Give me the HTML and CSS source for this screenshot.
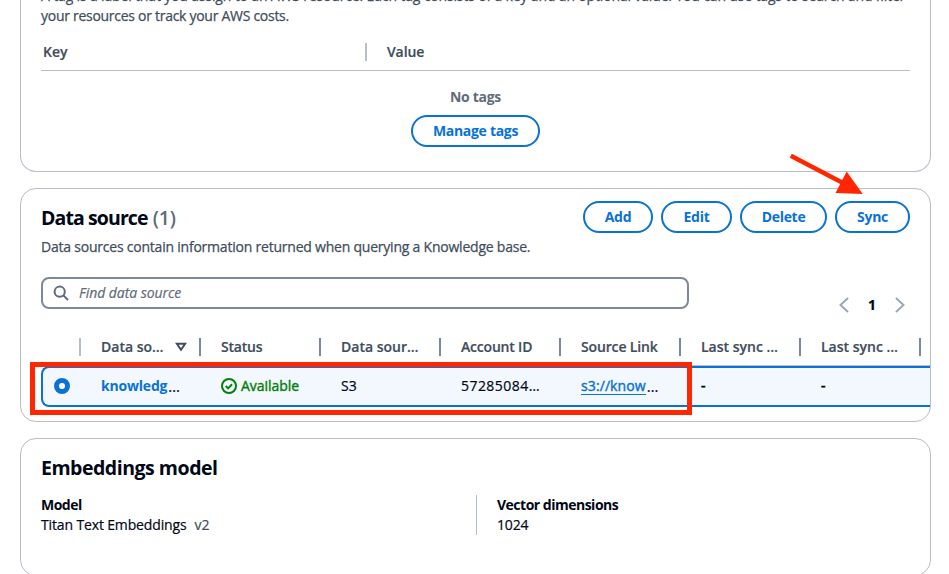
FILE: index.html
```html
<!DOCTYPE html>
<html lang="en">
<head>
<meta charset="utf-8">
<title>Knowledge base</title>
<link rel="stylesheet" href="styles.css">
</head>
<body>
<main class="page">
  <section class="panel panel-tags">
    <p class="description tags-description"><span class="tags-line">A tag is a label that you assign to an AWS resource. Each tag consists of a key and an optional value. You can use tags to search and filter</span><br><span class="tags-tail">your resources or track your AWS costs.</span></p>
    <div class="tags-head"><div class="th-key">Key</div><div class="th-value">Value</div></div>
    <div class="empty"><span class="empty-text">No tags</span><button class="btn btn-manage">Manage tags</button></div>
  </section>

  <section class="panel panel-source">
    <header class="source-header">
      <div>
        <h2 class="title title-source">Data source <span class="count">(1)</span></h2>
        <p class="description source-description">Data sources contain information returned when querying a Knowledge base.</p>
      </div>
      <div class="actions">
        <button class="btn btn-add">Add</button><button class="btn btn-edit">Edit</button><button class="btn btn-delete">Delete</button><button class="btn btn-sync">Sync</button>
      </div>
    </header>
    <div class="tools">
      <div class="search">
        <svg class="icon" viewBox="0 0 16 16"><circle cx="6.700" cy="6.700" r="5.100"/><path d="M10.400 10.400 15 15"/></svg>
        <span class="placeholder">Find data source</span>
      </div>
      <div class="pager">
        <svg class="icon" viewBox="0 0 16 16"><path d="M12 1 4.500 8 12 15"/></svg>
        <span>1</span>
        <svg class="icon" viewBox="0 0 16 16"><path d="M4 1 11.500 8 4 15"/></svg>
      </div>
    </div>
    <div class="table">
      <div class="row head">
        <div class="cell light"></div>
        <div class="cell sorted"><span class="h-name">Data so…</span><svg class="sort" viewBox="0 0 12 10"><path d="M1.800 1.700h8.400L6 7.700z"/></svg></div>
        <div class="cell"><span class="h-status">Status</span></div>
        <div class="cell"><span class="h-type">Data sour…</span></div>
        <div class="cell"><span class="h-account">Account ID</span></div>
        <div class="cell"><span class="h-link">Source Link</span></div>
        <div class="cell"><span class="h-sync">Last sync …</span></div>
        <div class="cell"><span class="h-sync">Last sync …</span></div>
      </div>
      <div class="row body">
        <div class="cell radio-cell"><span class="radio"></span></div>
        <div class="cell"><a class="name">knowledg</a><span class="dots">…</span></div>
        <div class="cell status"><svg class="icon" viewBox="0 0 16 16"><circle cx="8" cy="8" r="7"/><path d="m4.800 8 2.300 2.400 4-4.200"/></svg><span class="available">Available</span></div>
        <div class="cell">S3</div>
        <div class="cell"><span class="account">57285084…</span></div>
        <div class="cell"><a class="link">s3://know</a><span class="dots">…</span></div>
        <div class="cell dash">-</div>
        <div class="cell dash">-</div>
      </div>
    </div>
    <div class="highlight"></div>
  </section>

  <section class="panel panel-model">
    <h2 class="title title-model">Embeddings model</h2>
    <div class="facts">
      <div class="fact"><strong class="f-model">Model</strong><div class="fact-value"><span class="f-titan">Titan Text Embeddings</span><span class="version">v2</span></div></div>
      <div class="fact divided"><strong class="f-vector">Vector dimensions</strong><div class="fact-value f-number">1024</div></div>
    </div>
  </section>
  <svg class="arrow" viewBox="0 0 80 50"><path class="shaft" d="M5.800 5.700 58 33"/><path class="tip" d="M61.700 21.500 77.700 44 50.500 43z"/></svg>
</main>
</body>
</html>
```

FILE: styles.css
```css
* { box-sizing: border-box; }
html, body { height: 100%; }
body { margin: 0; overflow: hidden; background: #fff; color: #000716; font: 14px/20px "Open Sans", "Noto Sans", sans-serif; -webkit-text-stroke: .2px currentColor; }
h2, p { margin: 0; }
.page { position: relative; height: 574px; padding: 0 18px 0 20px; overflow: hidden; }
.panel { position: relative; border: 1px solid #b6bec9; border-radius: 16px; padding: 0 20px; white-space: nowrap; }
.panel-tags { display: flow-root; height: 172px; border-top: 0; border-radius: 0 0 16px 16px; }
.description { color: #414d5c; -webkit-text-stroke-width: .25px; }
.tags-description { margin-top: -14px; }
.tags-line { letter-spacing: -.155px; }
.tags-tail { letter-spacing: -.28px; }
.tags-head { display: grid; grid-template-columns: 326px 1fr; padding-top: 8px; height: 36px; margin-top: 9px; border-bottom: 1px solid #b6bec9; color: #414d5c; font-weight: 600; }
.th-key { padding-left: 2px; height: 18px; line-height: 18px; border-right: 2px solid #b6bec9; }
.th-value { padding-left: 20px; height: 18px; line-height: 18px; letter-spacing: -.1px; }
.empty { display: flex; flex-direction: column; align-items: center; padding-top: 16px; gap: 8px; color: #5f6b7a; font-weight: 700; }
.empty-text { letter-spacing: -.3px; -webkit-text-stroke-width: 0; }
.btn { height: 32px; padding: 0; border: 2px solid #0972d3; border-radius: 16px; background: #fff; color: #0972d3; font: 700 14px/20px "Open Sans", "Noto Sans", sans-serif; letter-spacing: -.3px; -webkit-text-stroke-width: 0; }
.btn-manage { width: 129px; }
.btn-add { width: 70px; }
.btn-edit { width: 71px; }
.btn-delete { width: 87px; }
.btn-sync { width: 75px; }
.panel-source { height: 234px; margin-top: 16px; }
.source-header { display: flex; justify-content: space-between; padding-top: 12px; }
.title { font-size: 19.5px; line-height: 24px; font-weight: 700; -webkit-text-stroke-width: 0; }
.title-source { margin-top: 5px; letter-spacing: -.9px; }
.count { margin-left: 1px; color: #5f6b7a; font-weight: 600; letter-spacing: -.2px; }
.source-description { margin-top: 7px; letter-spacing: -.22px; }
.actions { display: flex; gap: 8px; }
.tools { display: flex; justify-content: space-between; margin-top: 20px; }
.search { display: flex; align-items: center; width: 648px; height: 32px; padding-left: 10px; gap: 10px; border: 2px solid #7d8998; border-radius: 8px; color: #5f6b7a; }
.placeholder { font-style: italic; letter-spacing: -.05px; }
.icon { display: block; width: 16px; height: 16px; fill: none; stroke: currentColor; stroke-width: 2; flex: none; }
.pager { display: flex; align-items: center; gap: 16px; height: 20px; margin: 18px 2px 0 0; font-weight: 700; }
.pager .icon { stroke: #9ba7b6; }
.table { width: 889px; overflow: hidden; margin-top: 13px; }
.row { display: grid; grid-template-columns: 40px repeat(7, 120px); width: 889px; }
.head { height: 38px; color: #414d5c; font-weight: 600; border-bottom: 1px solid #b6bec9; }
.head .cell { height: 18px; margin-top: 10px; line-height: 18px; border-right: 2px solid #7d8998; }
.head .light { border-color: #b6bec9; }
.h-status { letter-spacing: -.2px; }
.h-account { letter-spacing: -.2px; }
.h-link { letter-spacing: -.15px; }
.cell { padding-left: 20px; display: flex; align-items: center; }
.sorted { justify-content: space-between; padding-right: 12px; }
.sort { width: 12px; height: 10px; fill: none; stroke: currentColor; stroke-width: 2; }
.body { height: 41px; grid-template-columns: 38px repeat(7, 120px); border: 2px solid #0972d3; border-right: 0; border-radius: 8px 0 0 8px; background: #f2f8fd; }
.body .cell { padding-bottom: 1px; }
.body .radio-cell { padding-left: 11px; }
.radio { width: 16px; height: 16px; border: 5px solid #0972d3; border-radius: 50%; background: #fff; }
.name { color: #0972d3; font-weight: 700; letter-spacing: -.2px; -webkit-text-stroke-width: 0; }
.dots { margin-left: 1px; font-size: 15px; line-height: 20px; letter-spacing: 0; }
.status { gap: 4px; color: #037f0c; }
.available { -webkit-text-stroke-width: .4px; letter-spacing: -.05px; }
.account { letter-spacing: .45px; }
.link { color: #0972d3; line-height: 17px; border-bottom: 1px solid #0972d3; letter-spacing: .1px; -webkit-text-stroke-width: .4px; }
.dash { -webkit-text-stroke-width: .6px; }
.highlight { position: absolute; left: 9px; top: 173px; width: 662px; height: 53px; border: 5px solid #ff2600; }
.panel-model { height: 138px; margin-top: 16px; }
.title-model { padding-top: 17px; letter-spacing: -.48px; }
.facts { display: grid; grid-template-columns: 435px 1fr; margin-top: 15px; }
.divided { border-left: 1px solid #b6bec9; padding-left: 20px; }
.fact strong { display: block; letter-spacing: -.5px; -webkit-text-stroke-width: 0; }
.fact-value { letter-spacing: -.14px; }
.version { margin-left: 8px; color: #414d5c; }
.arrow { position: absolute; left: 785px; top: 150px; width: 80px; height: 50px; }
.shaft { stroke: #ff2600; stroke-width: 4.500; fill: none; }
.tip { fill: #ff2600; }
```
